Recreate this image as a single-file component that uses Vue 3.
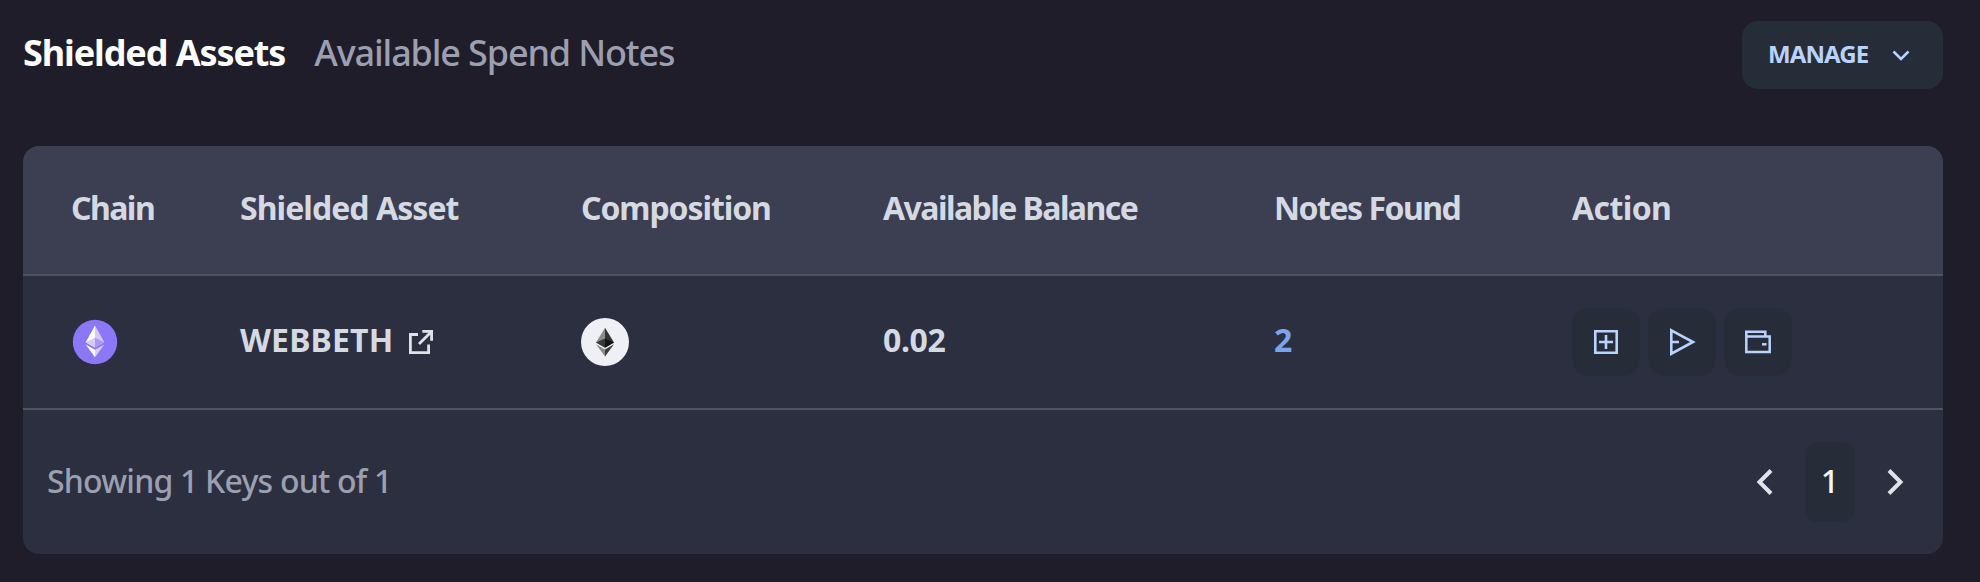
<script setup>
const columns = [
  { label: 'Chain', cls: 'c1' },
  { label: 'Shielded Asset', cls: 'c2' },
  { label: 'Composition', cls: 'c3' },
  { label: 'Available Balance', cls: 'c4' },
  { label: 'Notes Found', cls: 'c5' },
  { label: 'Action', cls: 'c6' },
]
</script>

<template>
  <main class="page">
    <header class="top">
      <nav class="tabs">
        <span class="tab active">Shielded Assets</span>
        <span class="tab idle">Available Spend Notes</span>
      </nav>
      <button class="manage">
        <span>MANAGE</span>
        <svg width="20" height="14" viewBox="0 0 20 14"><path d="M2.500 3.500 10 11 17.500 3.500" fill="none" stroke="#b9d3ff" stroke-width="2.500" /></svg>
      </button>
    </header>

    <section class="card">
      <div class="row head">
        <span v-for="c in columns" :key="c.label" :class="c.cls">{{ c.label }}</span>
      </div>
      <div class="row body">
        <span class="chain">
          <svg width="48" height="48" viewBox="0 0 48 48">
            <circle cx="24" cy="24" r="22.200" fill="#8c78f7" />
            <path d="M24 7.500 14.700 24.200 24 29.500Z" fill="#fff" />
            <path d="M24 7.500 33.300 24.200 24 29.500Z" fill="#d4c8fd" />
            <path d="M24 19.800 14.700 24.200 24 29.500Z" fill="#d5cafc" />
            <path d="M24 19.800 33.300 24.200 24 29.500Z" fill="#a999f5" />
            <path d="M14.700 26.400 24 31.800V39.300Z" fill="#fff" />
            <path d="M33.300 26.400 24 31.800V39.300Z" fill="#d8cdfd" />
          </svg>
        </span>
        <span class="asset">
          <span class="name">WEBBETH</span>
          <svg width="26" height="26" viewBox="0 0 26 26" fill="none" stroke="#dfe2e9" stroke-width="2.800">
            <path d="M10 5.500H2.400V23.600H20.600V15.500M14.300 2.400H23.600V11.700M23.300 2.700 11 15" />
          </svg>
        </span>
        <span>
          <svg width="48" height="48" viewBox="0 0 48 48">
            <circle cx="24" cy="24" r="24" fill="#eff0f5" />
            <path d="M24 9.700 15 24.400 24 29.800Z" fill="#8c8c8c" />
            <path d="M24 9.700 33 24.400 24 29.800Z" fill="#343434" />
            <path d="M24 20.500 15 24.400 24 29.800Z" fill="#393939" />
            <path d="M24 20.500 33 24.400 24 29.800Z" fill="#141414" />
            <path d="M15 26.200 24 31.500V38.500Z" fill="#8c8c8c" />
            <path d="M33 26.200 24 31.500V38.500Z" fill="#3c3c3b" />
          </svg>
        </span>
        <span class="balance">0.02</span>
        <span class="notes">2</span>
        <span class="actions">
          <button class="act">
            <svg width="28" height="28" viewBox="0 0 28 28" fill="none" stroke="#b9d3ff" stroke-width="2.600">
              <path d="M3.300 3.300H24.700V24.700H3.300ZM14 7V21M7 14H21" />
            </svg>
          </button>
          <button class="act">
            <svg width="28" height="30" viewBox="0 0 28 30" fill="none" stroke="#b9d3ff" stroke-width="2.600">
              <path d="M3.300 3.300 25 15 3.300 26.700ZM3 15H11" />
            </svg>
          </button>
          <button class="act">
            <svg width="28" height="28" viewBox="0 0 28 28" fill="none" stroke="#b9d3ff" stroke-width="2.500">
              <path d="M2.300 8.400H25.700V23.900H2.300ZM2.300 8.400V3.800H21.300V8" />
              <path d="M18 16.300H22.500" />
            </svg>
          </button>
        </span>
      </div>
      <footer class="foot">
        <span class="showing">Showing 1 Keys out of 1</span>
        <div class="pager">
          <svg width="18" height="28" viewBox="0 0 18 28"><path d="M15 2.500 3.500 14 15 25.500" fill="none" stroke="#e0e3ea" stroke-width="4" /></svg>
          <span class="current">1</span>
          <svg width="18" height="28" viewBox="0 0 18 28"><path d="M3 2.500 14.500 14 3 25.500" fill="none" stroke="#e0e3ea" stroke-width="4" /></svg>
        </div>
      </footer>
    </section>
  </main>
</template>

<style>
html, body { background: #1f1d29; }
</style>

<style scoped>
* { box-sizing: border-box; }
.page {
  height: 582px;
  padding: 21px 37px 28px 23px;
  background: #1f1d29;
  font-family: "Noto Sans", sans-serif;
  white-space: nowrap;
  overflow: hidden;
}
.top { display: flex; justify-content: space-between; height: 68px; margin-bottom: 57px; }
.tabs { display: flex; gap: 29px; font-size: 36px; line-height: 64px; }
.active { color: #fff; font-weight: 700; letter-spacing: -1.1px; }
.idle { color: #9c9fb0; font-weight: 500; letter-spacing: -1.15px; }
button { border: 0; padding: 0; background: #272d38; font-family: inherit; border-radius: 16px; display: flex; align-items: center; }
.manage { width: 201px; height: 68px; padding: 0 32px 0 26px; justify-content: space-between; color: #b9d3ff; font-size: 24px; font-weight: 700; letter-spacing: -0.9px; }
.manage span { padding-bottom: 3px; }
svg { display: block; flex: none; }
.card { height: 408px; border-radius: 16px; background: #2c2f40; overflow: hidden; }
.row {
  display: grid;
  grid-template-columns: 169px 341px 302px 391px 298px 1fr;
  align-items: center;
  padding-left: 48px;
  color: #d5d9e2;
  font-size: 32px;
  font-weight: 700;
}
.head { height: 130px; padding-bottom: 6px; background: #3c3e51; border-bottom: 2px solid #505361; }
.c1 { letter-spacing: -1.55px; }
.c2 { letter-spacing: -0.95px; }
.c3 { letter-spacing: -1.1px; }
.c4 { letter-spacing: -1.55px; }
.c5 { letter-spacing: -1.5px; }
.c6 { letter-spacing: -0.6px; }
.body { height: 134px; border-bottom: 2px solid #505361; }
.asset { display: flex; align-items: center; gap: 15px; }
.name { letter-spacing: 0.15px; }
.name, .balance, .notes { padding-bottom: 5px; }
.balance { letter-spacing: -0.4px; }
.notes { color: #79a4ee; }
.actions { display: flex; gap: 8px; }
.act { width: 68px; height: 68px; justify-content: center; }
.foot { display: flex; justify-content: space-between; align-items: center; height: 144px; padding: 0 39px 0 24px; color: #9c9fb0; font-size: 32px; }
.showing { padding-bottom: 4px; font-weight: 500; letter-spacing: -0.78px; }
.pager { display: flex; align-items: center; gap: 31px; }
.current { width: 50px; height: 80px; line-height: 77px; border-radius: 12px; background: #272d38; color: #f1f5fd; text-align: center; font-weight: 500; }
</style>
